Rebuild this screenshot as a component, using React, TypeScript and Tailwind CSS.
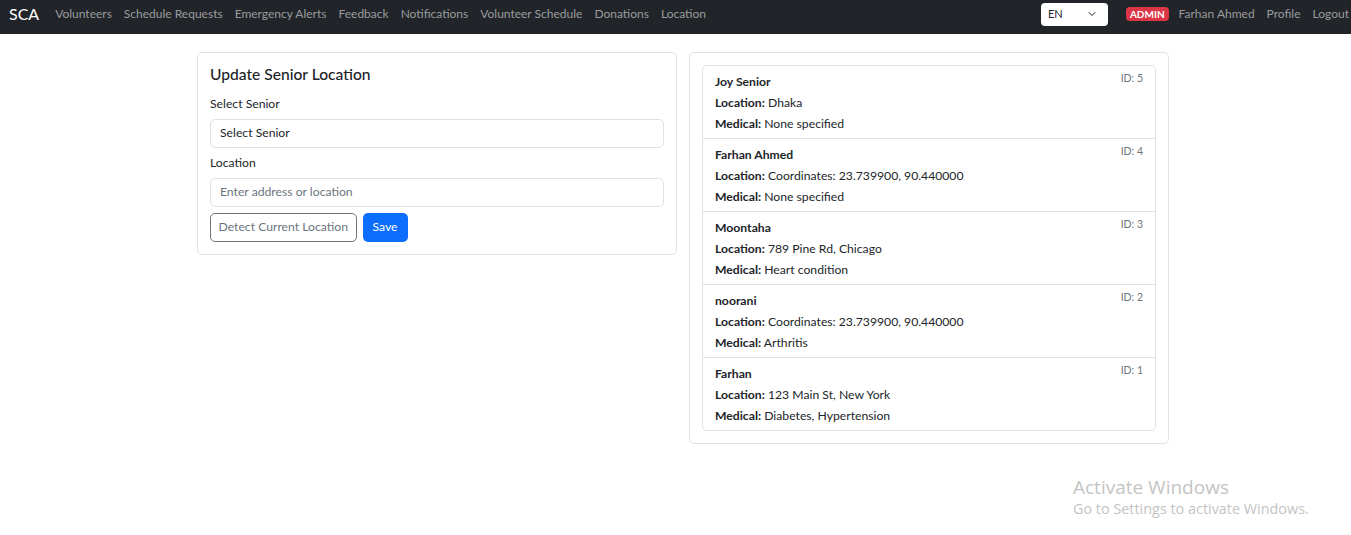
import { ChevronDown } from 'lucide-react'

const links = [
    'Volunteers',
    'Schedule Requests',
    'Emergency Alerts',
    'Feedback',
    'Notifications',
    'Volunteer Schedule',
    'Donations',
    'Location',
]

const seniors = [
    { id: 5, name: 'Joy Senior', location: 'Dhaka', medical: 'None specified' },
    { id: 4, name: 'Farhan Ahmed', location: 'Coordinates: 23.739900, 90.440000', medical: 'None specified' },
    { id: 3, name: 'Moontaha', location: '789 Pine Rd, Chicago', medical: 'Heart condition' },
    { id: 2, name: 'noorani', location: 'Coordinates: 23.739900, 90.440000', medical: 'Arthritis' },
    { id: 1, name: 'Farhan', location: '123 Main St, New York', medical: 'Diabetes, Hypertension' },
]

export default function App() {
    return (
        <div className="relative min-h-[535px] overflow-hidden bg-white font-['Lato',sans-serif] text-[12.2px] text-[#212529]">
            <nav className="flex h-[34px] items-center bg-[#212529] pb-[6px] pl-[9px]">
                <div className="mr-[16px] text-[16px] text-white">SCA</div>
                <div className="flex gap-[12px] text-[12px] text-[#9a9c9e]">
                    {links.map((l) => (
                        <span key={l}>{l}</span>
                    ))}
                </div>
                <div className="ml-auto mr-[2px] flex items-center">
                    <div className="flex h-[23px] w-[67px] items-center justify-between rounded-[4px] bg-white pl-[7px] pr-[10px] text-[11px] text-[#212529]">
                        <span>EN</span>
                        <ChevronDown size={12} strokeWidth={2} />
                    </div>
                    <span className="ml-[18px] rounded-[4px] bg-[#dc3545] px-[4px] text-[10px] leading-[14px] font-bold text-white">
                        ADMIN
                    </span>
                    <div className="ml-[10px] flex gap-[12px] whitespace-nowrap text-[12px] text-[#9a9c9e]">
                        <span>Farhan Ahmed</span>
                        <span>Profile</span>
                        <span>Logout</span>
                    </div>
                </div>
            </nav>

            <div className="mt-[18px] flex items-start justify-center gap-[12px] pl-[15px]">
                <div className="w-[480px] rounded-[5px] border border-[#dee2e6] p-[12px]">
                    <h5 className="mb-[10px] text-[15.6px] leading-[19px] font-medium">Update Senior Location</h5>
                    <div className="mb-[6px] leading-[19px]">Select Senior</div>
                    <div className="mb-[5px] flex h-[29px] items-center rounded-[5px] border border-[#dee2e6] px-[9px]">
                        Select Senior
                    </div>
                    <div className="mb-[6px] leading-[19px]">Location</div>
                    <div className="mb-[6px] flex h-[29px] items-center rounded-[5px] border border-[#dee2e6] px-[9px] text-[#6c757d]">
                        Enter address or location
                    </div>
                    <div className="flex gap-[6px]">
                        <button className="h-[29px] rounded-[5px] border border-[#6c757d] px-[7.5px] text-[#6c757d]">
                            Detect Current Location
                        </button>
                        <button className="h-[29px] rounded-[5px] bg-[#0d6efd] px-[10px] text-white">Save</button>
                    </div>
                </div>

                <div className="w-[480px] rounded-[5px] border border-[#dee2e6] p-[12px]">
                    <div className="rounded-[5px] border border-[#dee2e6]">
                        {seniors.map((s, i) => (
                            <div
                                key={s.id}
                                className={`relative px-[12px] pt-[5px] pb-[4px] leading-[21px] ${i > 0 ? 'border-t border-[#dee2e6]' : ''}`}
                            >
                                <div className="font-bold">{s.name}</div>
                                <div>
                                    <b>Location:</b> {s.location}
                                </div>
                                <div>
                                    <b>Medical:</b> {s.medical}
                                </div>
                                <span className="absolute top-[5px] right-[12px] text-[10.5px] leading-[14px] text-[#6c757d]">
                                    ID: {s.id}
                                </span>
                            </div>
                        ))}
                    </div>
                </div>
            </div>

            <div className="absolute top-[475px] left-[1073px] font-['Open_Sans',sans-serif] whitespace-nowrap text-[#c4c4c4]">
                <div className="text-[19px] leading-[24px]">Activate Windows</div>
                <div className="text-[14.4px] leading-[20px]">Go to Settings to activate Windows.</div>
            </div>
        </div>
    )
}
